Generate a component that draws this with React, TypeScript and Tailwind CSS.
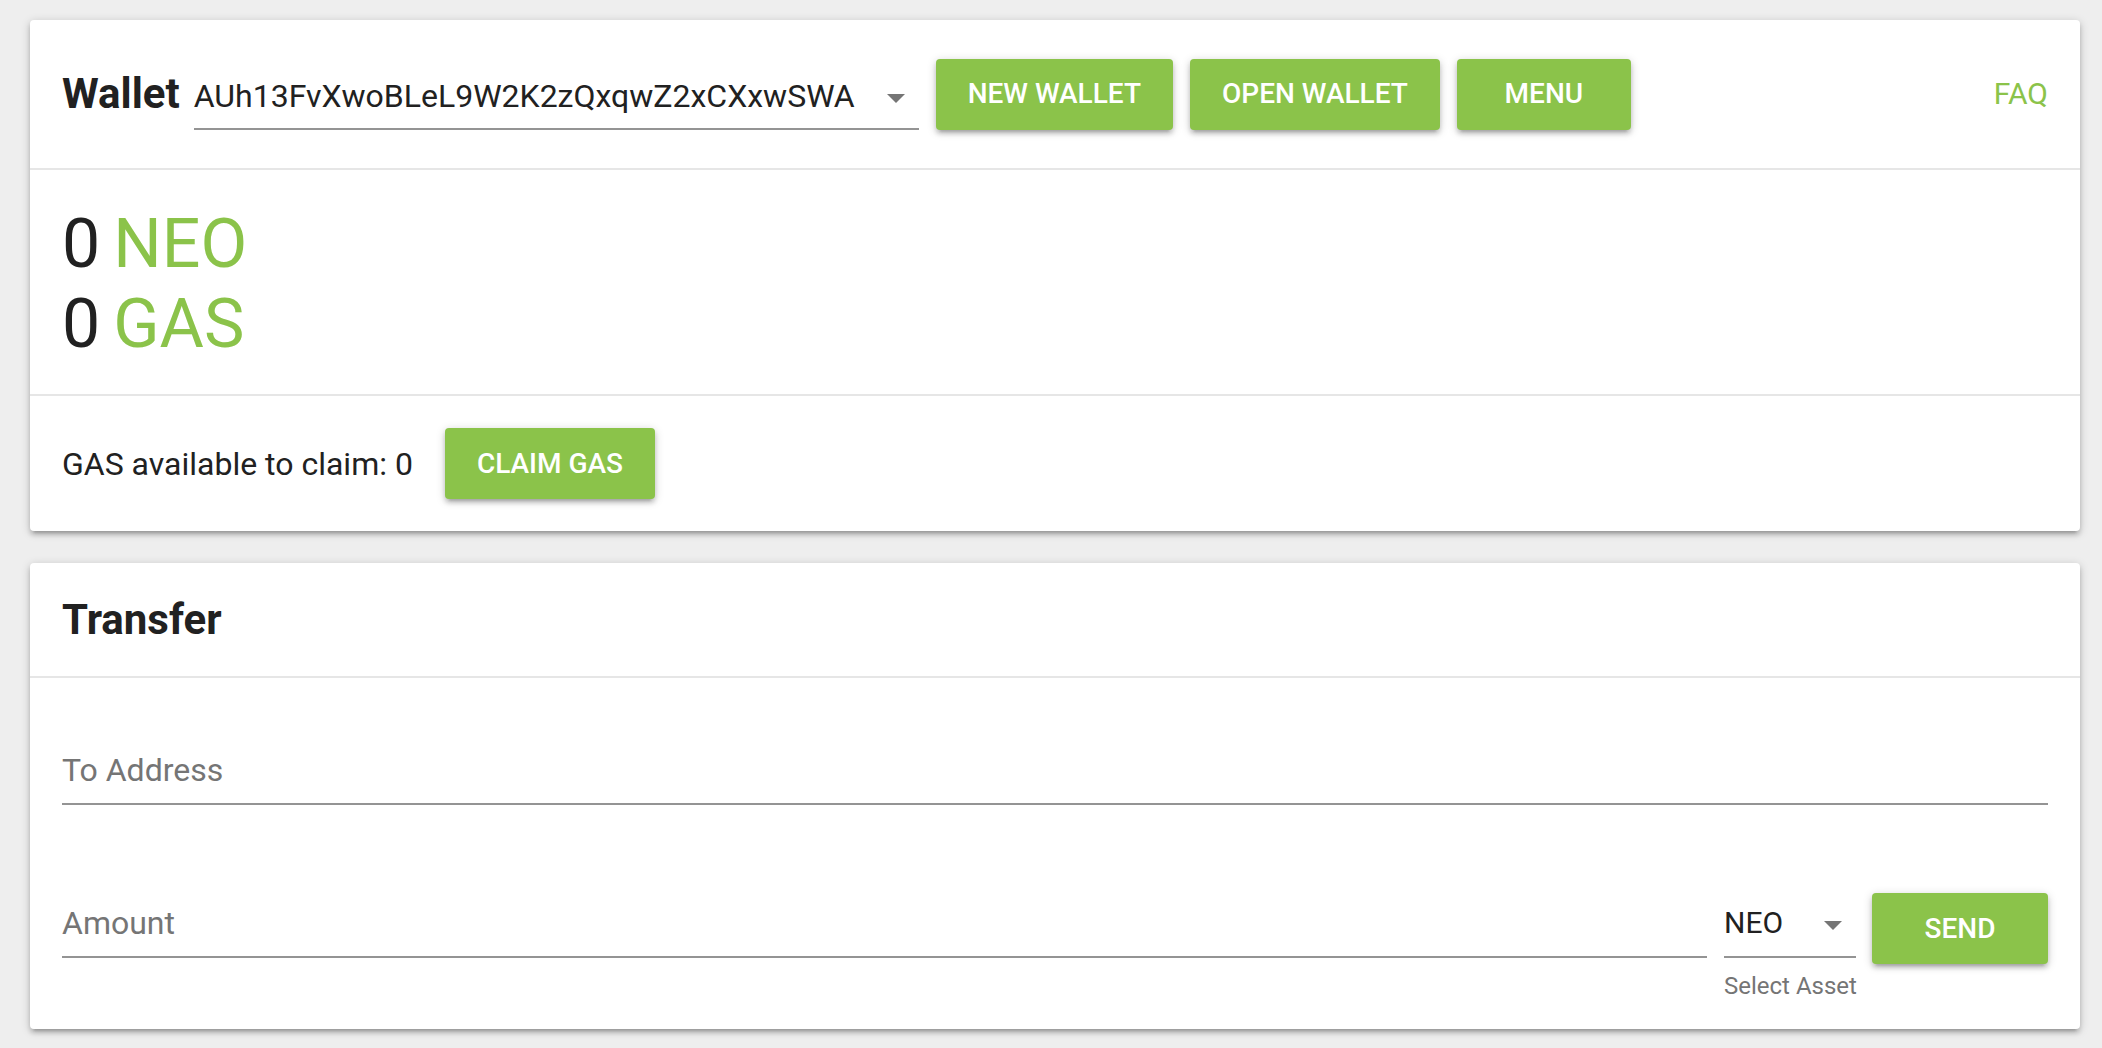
import React from 'react'

const GREEN_BTN =
  'h-[71px] min-w-[174px] px-[32px] rounded-[4px] bg-[#8bc34a] text-white text-[28px] font-medium uppercase flex items-center justify-center shadow-[0_2px_10px_rgba(0,0,0,0.2),0_4px_4px_rgba(0,0,0,0.14),0_6px_2px_-4px_rgba(0,0,0,0.12)]'

const CARD =
  'bg-white rounded-[4px] shadow-[0_2px_10px_rgba(0,0,0,0.2),0_4px_4px_rgba(0,0,0,0.14),0_6px_2px_-4px_rgba(0,0,0,0.12)]'

function DropArrow() {
  return (
    <svg viewBox="7 10 10 5" className="w-[18px] h-[9px] fill-[#757575]">
      <path d="M7 10l5 5 5-5z" />
    </svg>
  )
}

export default function App() {
  return (
    <div
      className="min-h-screen h-[1048px] bg-[#eeeeee] pt-[20px] pl-[30px] pr-[22px] text-[#212121]"
      style={{ fontFamily: 'Roboto, "Liberation Sans", sans-serif' }}
    >
      {/* Wallet card */}
      <div className={CARD}>
        {/* Header */}
        <div className="h-[150px] flex items-center px-[32px] border-b-2 border-[#e6e6e6]">
          <h1 className="text-[42px] leading-none font-bold text-[#212121]">Wallet</h1>
          <div className="ml-[14px] flex items-center gap-[17px]">
            <div className="w-[725px] pt-[18px]">
              <div className="flex items-center pb-[12px] border-b-2 border-[#949494]">
                <span className="flex-1 h-[40px] leading-[40px] text-[32px] text-[#212121]">
                  AUh13FvXwoBLeL9W2K2zQxqwZ2xCXxwSWA
                </span>
                <span className="mr-[14px] mt-[4px]">
                  <DropArrow />
                </span>
              </div>
            </div>
            <button className={GREEN_BTN}>New Wallet</button>
            <button className={GREEN_BTN}>Open Wallet</button>
            <button className={GREEN_BTN}>Menu</button>
          </div>
          <a className="ml-auto text-[30px] leading-none text-[#8bc34a]">FAQ</a>
        </div>

        {/* Balances */}
        <div className="pt-[34px] pb-[30px] px-[32px] border-b-2 border-[#e6e6e6] text-[68px] leading-[80px]">
          <div>
            0<span className="ml-[13px] text-[#8bc34a]">NEO</span>
          </div>
          <div>
            0<span className="ml-[13px] text-[#8bc34a]">GAS</span>
          </div>
        </div>

        {/* Claim */}
        <div className="flex items-center gap-[32px] px-[32px] py-[32px]">
          <span className="text-[32px]">GAS available to claim: 0</span>
          <button className={GREEN_BTN}>Claim Gas</button>
        </div>
      </div>

      {/* Transfer card */}
      <div className={`${CARD} mt-[32px]`}>
        <div className="h-[115px] flex items-center px-[32px] border-b-2 border-[#e6e6e6]">
          <h2 className="text-[42px] leading-none font-bold">Transfer</h2>
        </div>

        <div className="px-[32px] pt-[72px] pb-[29px]">
          <div className="pb-[13px] border-b-2 border-[#949494]">
            <input
              placeholder="To Address"
              className="w-full h-[40px] text-[32px] outline-none bg-transparent placeholder:text-[#757575]"
            />
          </div>

          <div className="mt-[88px] flex items-start">
            <div className="flex-1 mt-[10px] pb-[13px] border-b-2 border-[#949494]">
              <input
                placeholder="Amount"
                className="w-full h-[40px] text-[32px] outline-none bg-transparent placeholder:text-[#757575]"
              />
            </div>

            <div className="ml-[17px] w-[132px] mt-[10px]">
              <div className="flex items-center pb-[13px] border-b-2 border-[#949494]">
                <span className="flex-1 h-[40px] leading-[40px] text-[30px]">NEO</span>
                <span className="mr-[14px] mt-[4px]">
                  <DropArrow />
                </span>
              </div>
              <div className="mt-[14px] text-[24px] leading-[28px] text-[#757575] whitespace-nowrap">
                Select Asset
              </div>
            </div>

            <button className={`${GREEN_BTN} ml-[16px] w-[176px]`}>Send</button>
          </div>
        </div>
      </div>
    </div>
  )
}
